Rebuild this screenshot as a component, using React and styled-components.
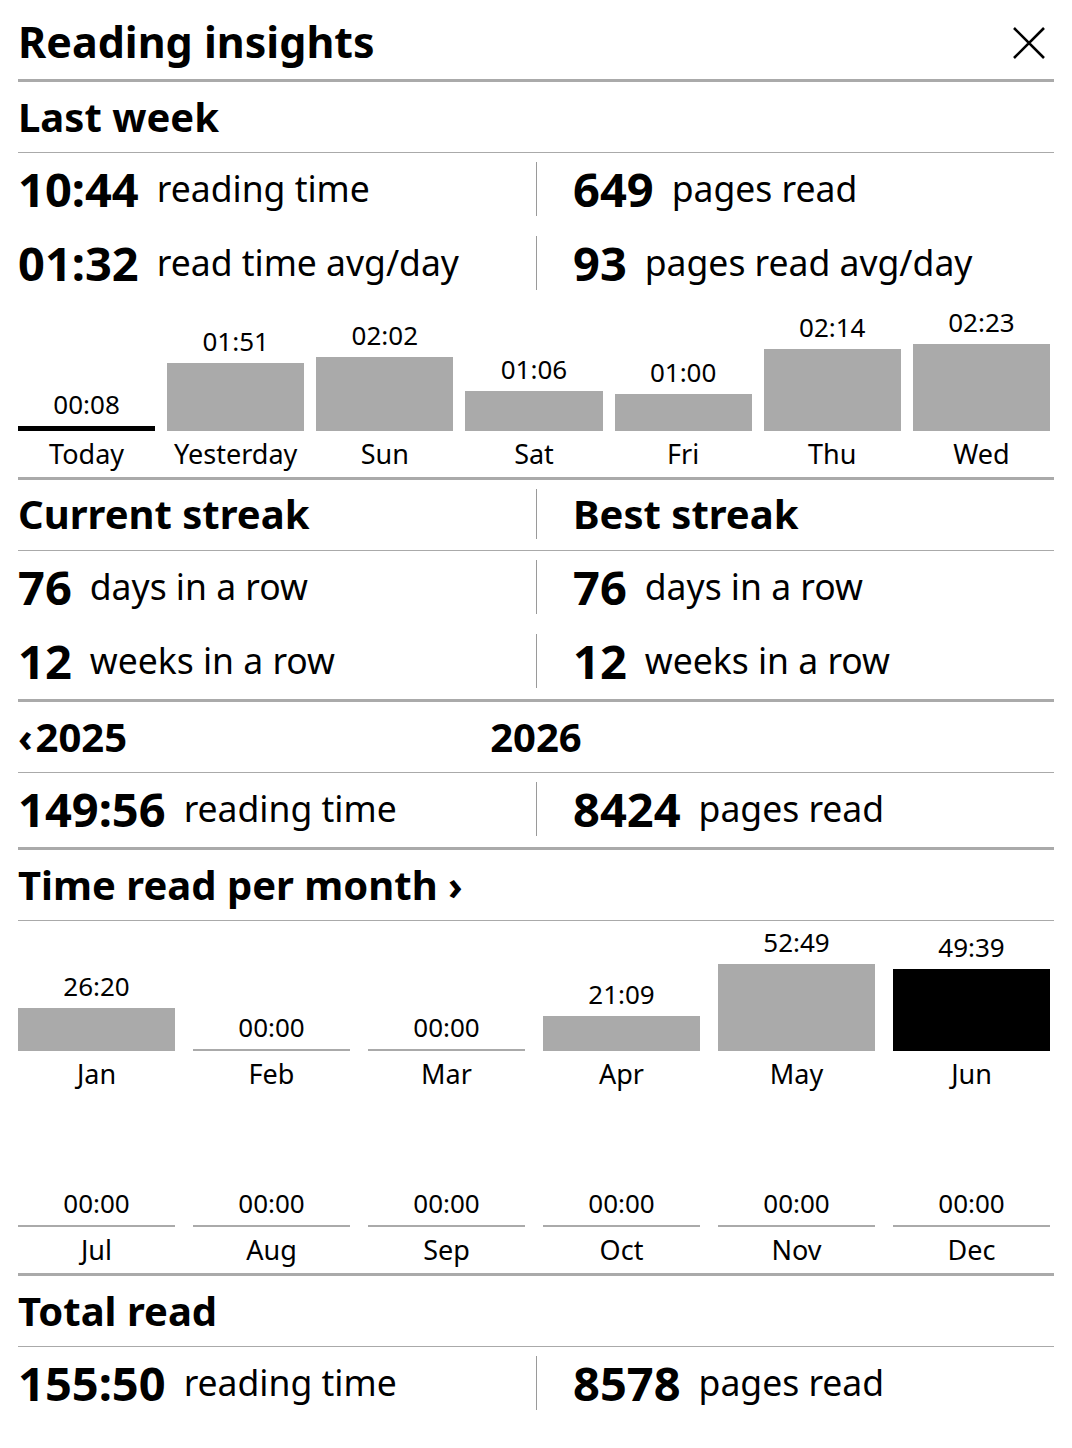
import React from "react";
import styled, { createGlobalStyle } from "styled-components";

const GlobalStyle = createGlobalStyle`
  html, body {
    margin: 0;
    padding: 0;
    background: #ffffff;
  }
  body {
    font-family: "Noto Sans", "Open Sans", sans-serif;
    color: #000;
  }
`;

const BAR_MAX = 87;

const week = [
  { label: "Today", time: "00:08", current: true },
  { label: "Yesterday", time: "01:51" },
  { label: "Sun", time: "02:02" },
  { label: "Sat", time: "01:06" },
  { label: "Fri", time: "01:00" },
  { label: "Thu", time: "02:14" },
  { label: "Wed", time: "02:23" },
];

const months = [
  { label: "Jan", time: "26:20" },
  { label: "Feb", time: "00:00" },
  { label: "Mar", time: "00:00" },
  { label: "Apr", time: "21:09" },
  { label: "May", time: "52:49" },
  { label: "Jun", time: "49:39", current: true },
  { label: "Jul", time: "00:00" },
  { label: "Aug", time: "00:00" },
  { label: "Sep", time: "00:00" },
  { label: "Oct", time: "00:00" },
  { label: "Nov", time: "00:00" },
  { label: "Dec", time: "00:00" },
];

const toMinutes = (t) => {
  const [h, m] = t.split(":").map(Number);
  return h * 60 + m;
};

function BarChart({ items, cols, gap, max }) {
  return (
    <Chart $cols={cols} $gap={gap}>
      {items.map((item) => {
        const h = Math.max(2, Math.round((toMinutes(item.time) / max) * BAR_MAX));
        return (
          <Column key={item.label}>
            <Plot>
              <BarValue>{item.time}</BarValue>
              <Bar $current={item.current} style={{ height: h }} />
            </Plot>
            <AxisLabel>{item.label}</AxisLabel>
          </Column>
        );
      })}
    </Chart>
  );
}

function Stat({ value, label, divided }) {
  return (
    <Cell $divided={divided}>
      <Value>{value}</Value>
      <Label>{label}</Label>
    </Cell>
  );
}

export default function App() {
  const weekMax = Math.max(...week.map((d) => toMinutes(d.time)));
  const monthMax = Math.max(...months.map((d) => toMinutes(d.time)));

  return (
    <Page>
      <GlobalStyle />
      <TitleBar>
        <Title>Reading insights</Title>
        <CloseButton aria-label="Close">
          <svg width="32" height="32" viewBox="0 0 32 32">
            <path d="M1 1 L31 31 M31 1 L1 31" stroke="#000" strokeWidth="2.6" fill="none" />
          </svg>
        </CloseButton>
      </TitleBar>

      <Section $thick>
        <Header>
          <HeaderText>Last week</HeaderText>
        </Header>
        <Split>
          <Stat value="10:44" label="reading time" />
          <Stat value="649" label="pages read" divided />
        </Split>
        <Split>
          <Stat value="01:32" label="read time avg/day" />
          <Stat value="93" label="pages read avg/day" divided />
        </Split>
        <BarChart items={week} cols={7} gap={12} max={weekMax} />
      </Section>

      <Section $thick>
        <Header>
          <HeaderSplit>
            <Cell>
              <HeaderText>Current streak</HeaderText>
            </Cell>
            <Cell $divided>
              <HeaderText>Best streak</HeaderText>
            </Cell>
          </HeaderSplit>
        </Header>
        <Split>
          <Stat value="76" label="days in a row" />
          <Stat value="76" label="days in a row" divided />
        </Split>
        <Split>
          <Stat value="12" label="weeks in a row" />
          <Stat value="12" label="weeks in a row" divided />
        </Split>
      </Section>

      <Section $thick>
        <Header>
          <YearNav>
            <HeaderText>
              <Arrow>‹</Arrow>2025
            </HeaderText>
            <HeaderText>2026</HeaderText>
            <span />
          </YearNav>
        </Header>
        <Split>
          <Stat value="149:56" label="reading time" />
          <Stat value="8424" label="pages read" divided />
        </Split>
      </Section>

      <Section $thick>
        <Header>
          <HeaderText>Time read per month ›</HeaderText>
        </Header>
        <BarChart items={months.slice(0, 6)} cols={6} gap={18} max={monthMax} />
        <BarChart items={months.slice(6)} cols={6} gap={18} max={monthMax} />
      </Section>

      <Section>
        <Header>
          <HeaderText>Total read</HeaderText>
        </Header>
        <Split>
          <Stat value="155:50" label="reading time" />
          <Stat value="8578" label="pages read" divided />
        </Split>
      </Section>
    </Page>
  );
}

const Page = styled.div`
  width: 100%;
  box-sizing: border-box;
  padding: 0 18px;
  min-height: 1448px;
  background: #fff;
`;

const TitleBar = styled.div`
  height: 79px;
  display: flex;
  align-items: center;
  justify-content: space-between;
  border-bottom: 3px solid #aaaaaa;
`;

const Title = styled.h1`
  margin: 0;
  padding-top: 4px;
  font-size: 43px;
  font-weight: 700;
  line-height: 1;
`;

const CloseButton = styled.button`
  border: 0;
  background: none;
  padding: 0;
  margin-right: 9px;
  margin-top: 6px;
  width: 32px;
  height: 32px;
  display: flex;
  cursor: pointer;
`;

const Section = styled.section`
  border-bottom: ${(p) => (p.$thick ? "3px solid #aaaaaa" : "none")};
`;

const Header = styled.div`
  height: 70px;
  display: flex;
  align-items: center;
  border-bottom: 1px solid #aaaaaa;
`;

const HeaderText = styled.h2`
  margin: 0;
  font-size: 40px;
  font-weight: 700;
  line-height: 1;
  white-space: nowrap;
`;

const Arrow = styled.span`
  margin-right: 3px;
`;

const HeaderSplit = styled.div`
  width: 100%;
  height: 100%;
  display: grid;
  grid-template-columns: 1fr 1fr;
`;

const YearNav = styled.div`
  width: 100%;
  display: grid;
  grid-template-columns: 1fr auto 1fr;
  align-items: center;
`;

const Split = styled.div`
  height: 74px;
  display: grid;
  grid-template-columns: 1fr 1fr;
`;

const Cell = styled.div`
  display: flex;
  align-items: center;
  min-height: 0;
  margin: 9px 0 11px;
  padding-left: ${(p) => (p.$divided ? "36px" : "0")};
  border-left: ${(p) => (p.$divided ? "1px solid #9a9a9a" : "none")};
`;

const Value = styled.span`
  font-size: 47px;
  font-weight: 700;
  line-height: 1;
  margin-right: 18px;
  white-space: nowrap;
`;

const Label = styled.span`
  font-size: 35.5px;
  font-weight: 400;
  line-height: 1;
  white-space: nowrap;
`;

const Chart = styled.div`
  display: grid;
  grid-template-columns: repeat(${(p) => p.$cols}, 1fr);
  column-gap: ${(p) => p.$gap}px;
  padding-right: 4px;
`;

const Column = styled.div`
  display: flex;
  flex-direction: column;
`;

const Plot = styled.div`
  height: 130px;
  display: flex;
  flex-direction: column;
  justify-content: flex-end;
`;

const BarValue = styled.div`
  font-size: 26px;
  line-height: 36px;
  margin-bottom: 4px;
  text-align: center;
`;

const Bar = styled.div`
  width: 100%;
  background: ${(p) => (p.$current ? "#000000" : "#aaaaaa")};
`;

const AxisLabel = styled.div`
  font-size: 27px;
  line-height: 46px;
  text-align: center;
`;
